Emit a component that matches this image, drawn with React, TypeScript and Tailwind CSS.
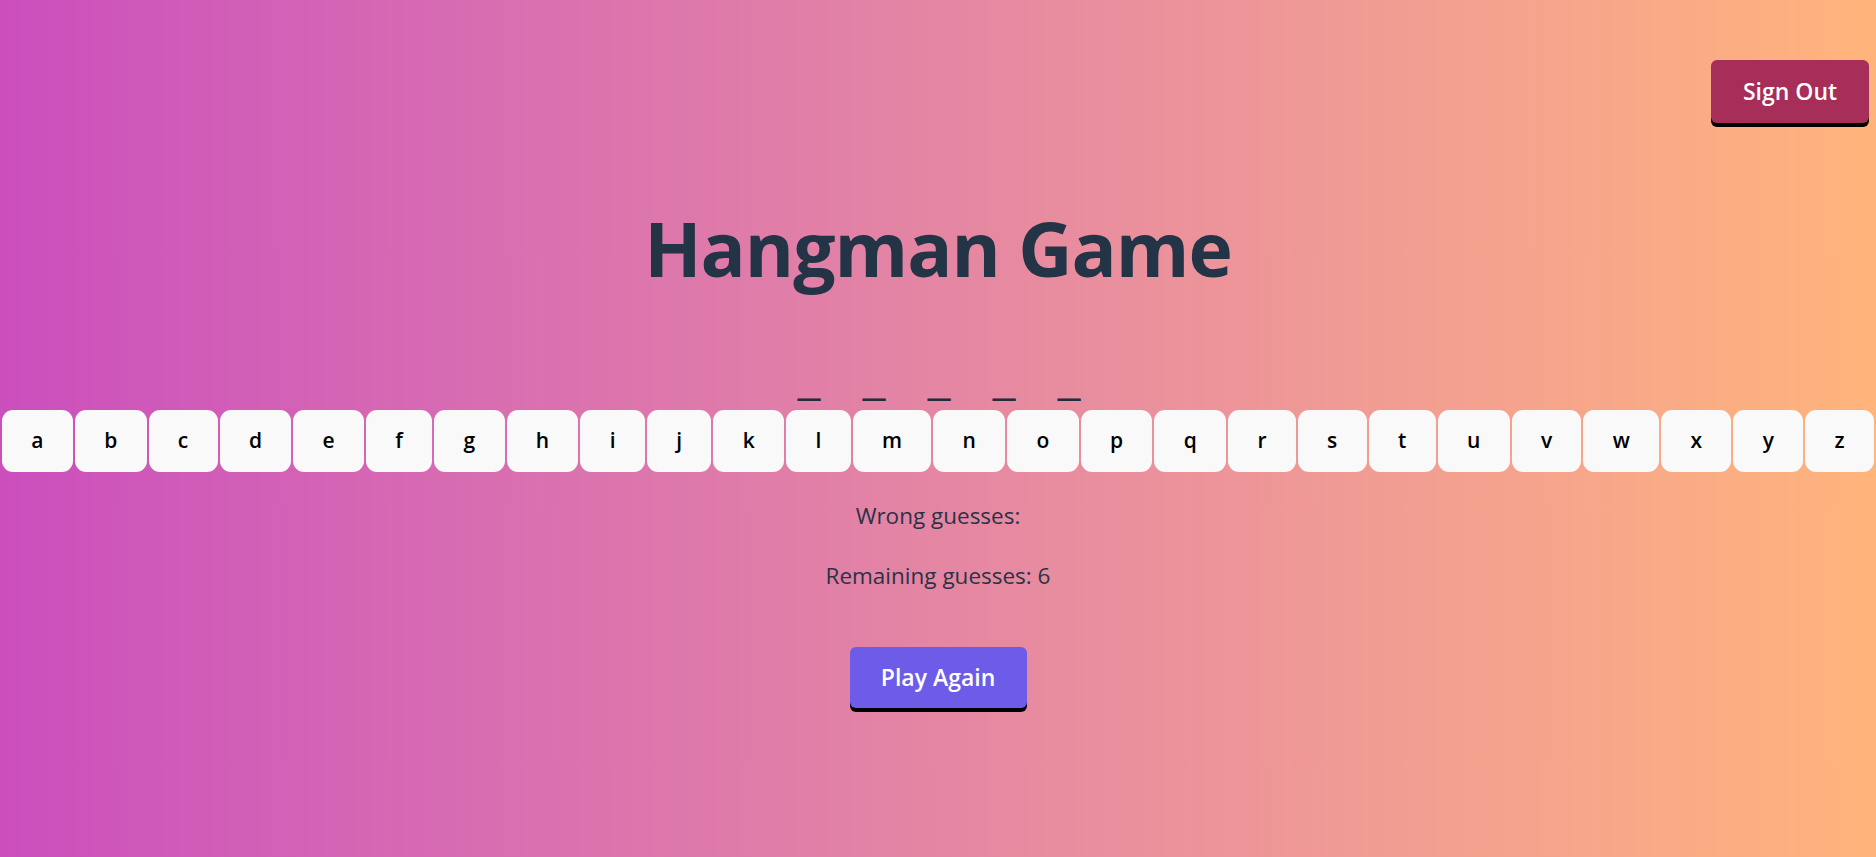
import { useState } from 'react'

const letras = 'abcdefghijklmnopqrstuvwxyz'.split('')

export default function App() {
  const [palabra] = useState('_____')
  const [fallos, setFallos] = useState<string[]>([])
  const restantes = 6 - fallos.length

  const adivinar = (l: string) => {
    if (!fallos.includes(l)) setFallos([...fallos, l])
  }

  return (
    <div className="relative min-h-screen w-full bg-linear-to-r from-[#cb4ebd] to-[#ffb47b] flex flex-col items-center font-['Open_Sans',sans-serif]">
      {/* Sign out */}
      <button className="absolute top-[60px] right-[7px] w-[158px] h-[63px] rounded-[6px] bg-[#a62e58] text-white text-[23px] font-semibold shadow-[0_4px_0_#000]">
        Sign Out
      </button>

      <h1 className="mt-[211px] text-[75px] leading-none font-bold text-[#233446] tracking-[-1px]">
        Hangman Game
      </h1>

      {/* Palabra */}
      <div className="mt-[73px] flex gap-[45px] h-[51px] text-[#232b3d] font-['Liberation_Sans',sans-serif]">
        {palabra.split('').map((c, i) => (
          <span key={i} className="w-[20px] text-[40px] leading-[40px] text-center">
            {c}
          </span>
        ))}
      </div>

      {/* Letras */}
      <div className="w-full flex gap-[2px] px-[2px]">
        {letras.map((l) => (
          <button
            key={l}
            onClick={() => adivinar(l)}
            className="flex-auto h-[62px] px-[20px] rounded-[11px] bg-[#f9f9f9] text-black text-[21px] font-semibold"
          >
            {l}
          </button>
        ))}
      </div>

      <p className="mt-[29px] text-[22.5px] leading-[30px] text-[#2a3346]">Wrong guesses: {fallos.join(', ')}</p>
      <p className="mt-[30px] text-[22.5px] leading-[30px] text-[#2a3346]">Remaining guesses: {restantes}</p>

      <button className="mt-[56px] w-[177px] h-[61px] rounded-[6px] bg-[#6c5ce7] text-white text-[23px] font-semibold shadow-[0_4px_0_#000]">
        Play Again
      </button>
    </div>
  )
}
